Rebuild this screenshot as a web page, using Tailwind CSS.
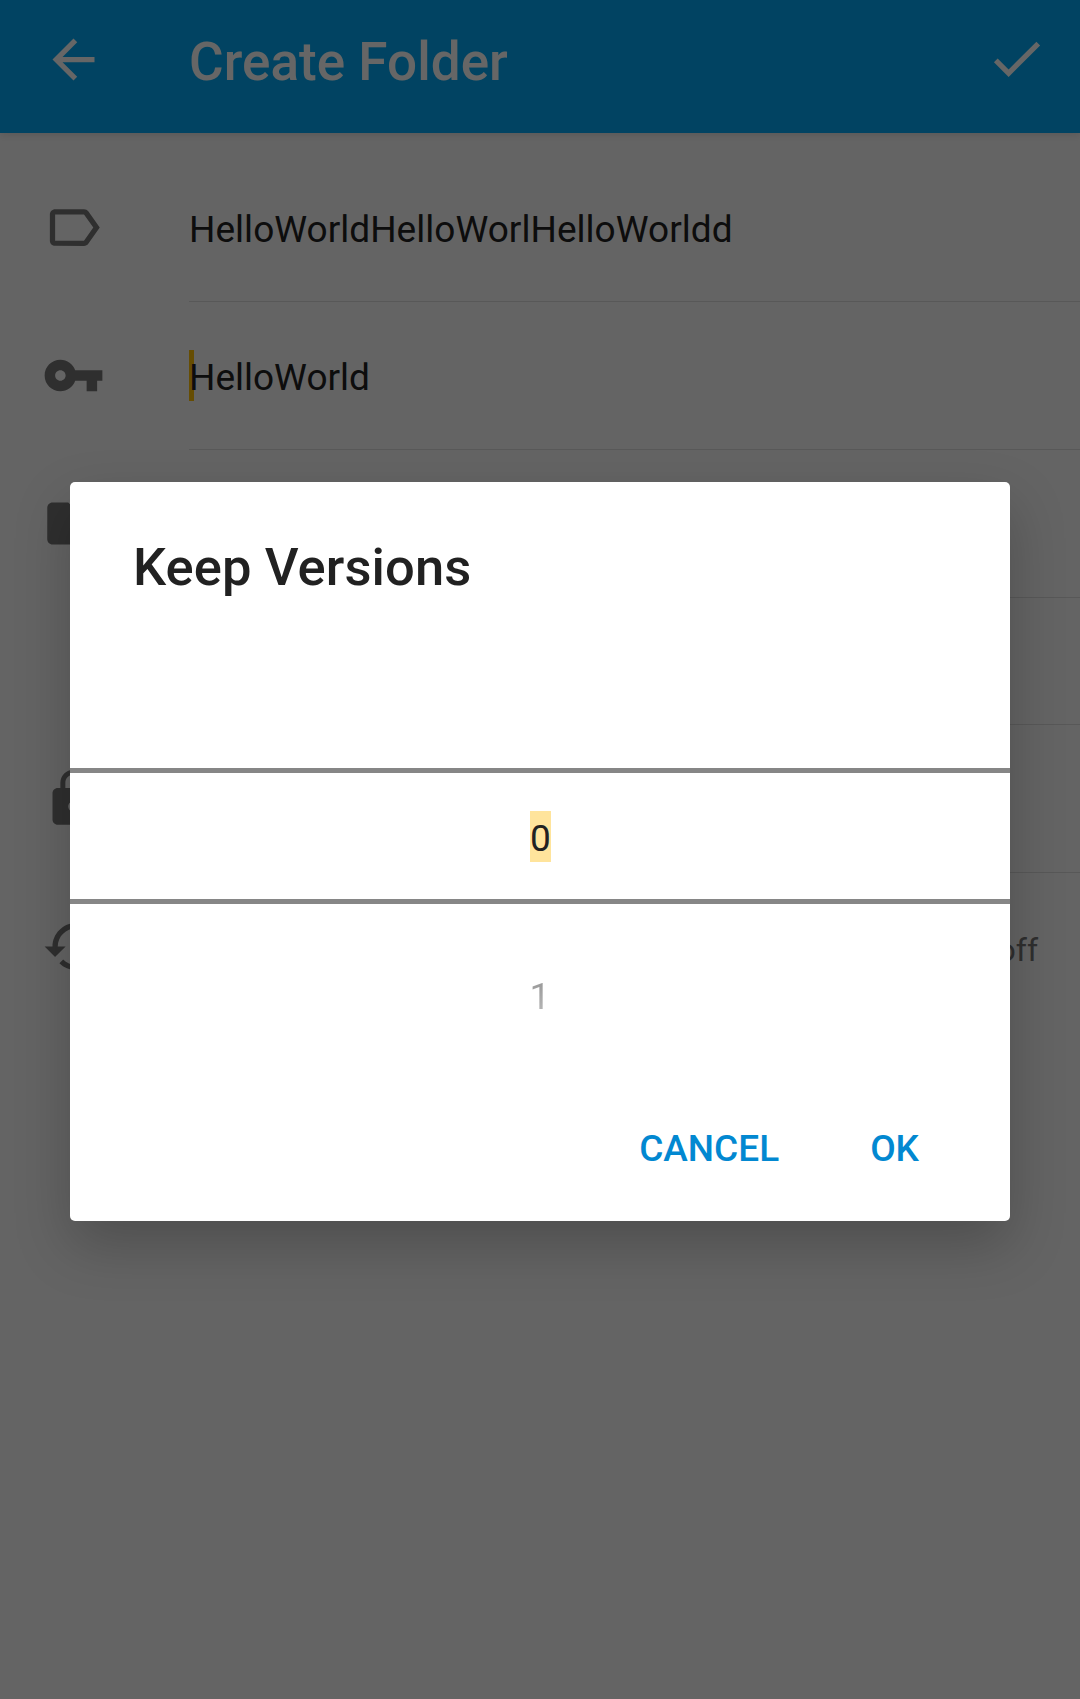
<!DOCTYPE html>
<html lang="en">
<head>
<meta charset="utf-8">
<title>Create Folder</title>
<script src="https://cdn.jsdelivr.net/npm/@tailwindcss/browser@4"></script>
</head>
<body class="relative h-[1699px] w-[1080px] overflow-hidden bg-[#fafafa] font-[Roboto,sans-serif] text-[37px] text-[#212121]">
  <header class="relative flex h-[133px] items-start bg-[#03a9f4] pt-7 pl-[42px] pr-[32px] text-white shadow-[0_2px_8px_rgba(0,0,0,0.12)]">
    <svg class="size-[63px] shrink-0" viewBox="0 0 24 24" fill="currentColor"><path d="M20 11H7.83l5.59-5.59L12 4l-8 8 8 8 1.41-1.41L7.83 13H20v-2z"/></svg>
    <h1 class="ml-[84px] grow text-[53px] leading-[69px] font-medium tracking-[0.05px]">Create Folder</h1>
    <svg class="-mt-px size-[63px] shrink-0" viewBox="0 0 24 24" fill="currentColor"><path d="M9 16.17L4.83 12l-1.42 1.41L9 19 21 7l-1.41-1.41z"/></svg>
  </header>

  <main class="pt-[21px]">
    <div class="flex h-[148px] pl-[42px]">
      <svg class="mt-[42px] size-[63px] shrink-0 text-[#757575]" viewBox="0 0 24 24" fill="currentColor"><path d="M17.63 5.84C17.27 5.33 16.67 5 16 5L5 5.01C3.9 5.01 3 5.9 3 7v10c0 1.1.9 1.99 2 1.99L16 19c.67 0 1.27-.33 1.63-.84L22 12l-4.37-6.16zM16 17H5V7h11l3.55 5L16 17z"/></svg>
      <div class="ml-[84px] grow border-b border-black/12 pt-[54px] leading-[43px] tracking-[0.03px]">HelloWorldHelloWorlHelloWorldd</div>
    </div>
    <div class="flex h-[148px] pl-[42px]">
      <svg class="mt-[42px] size-[63px] shrink-0 text-[#757575]" viewBox="0 0 24 24" fill="currentColor"><path d="M12.65 10C11.83 7.67 9.61 6 7 6c-3.31 0-6 2.69-6 6s2.69 6 6 6c2.61 0 4.83-1.67 5.65-4H17v4h4v-4h2v-4H12.65zM7 14c-1.1 0-2-.9-2-2s.9-2 2-2 2 .9 2 2-.9 2-2 2z"/></svg>
      <div class="relative ml-[84px] grow border-b border-black/12 pt-[54px] leading-[43px]"><span class="absolute top-[48px] left-0 h-[51px] w-[5px] bg-[#ffc107]"></span><span class="relative">HelloWorld</span></div>
    </div>
    <div class="flex h-[148px] pl-[42px]">
      <svg class="mt-[42px] size-[63px] shrink-0 text-[#757575]" viewBox="0 0 24 24" fill="currentColor"><path d="M10 4H4c-1.1 0-1.99.9-1.99 2L2 18c0 1.1.9 2 2 2h16c1.1 0 2-.9 2-2V8c0-1.1-.9-2-2-2h-8l-2-2z"/></svg>
      <div class="ml-[84px] grow border-b border-black/12"></div>
    </div>
    <div class="flex h-[127px] pl-[189px]"><div class="grow border-b border-black/12"></div></div>
    <div class="flex h-[148px] pl-[42px]">
      <svg class="mt-[42px] size-[63px] shrink-0 text-[#757575]" viewBox="0 0 24 24" fill="currentColor"><path d="M18 8h-1V6c0-2.76-2.24-5-5-5S7 3.24 7 6v2H6c-1.1 0-2 .9-2 2v10c0 1.1.9 2 2 2h12c1.1 0 2-.9 2-2V10c0-1.1-.9-2-2-2zm-6 9c-1.1 0-2-.9-2-2s.9-2 2-2 2 .9 2 2-.9 2-2 2zm3.1-9H8.900V6c0-1.710 1.390-3.100 3.100-3.100s3.100 1.390 3.100 3.100v2z"/></svg>
      <div class="ml-[84px] grow border-b border-black/12"></div>
    </div>
    <div class="flex h-[148px] pr-[42px] pl-[42px]">
      <svg class="mt-[42px] size-[63px] shrink-0 text-[#757575]" viewBox="0 0 24 24" fill="currentColor"><path d="M13 3c-4.970 0-9 4.030-9 9H1l3.890 3.890.070.140L9 12H6c0-3.870 3.130-7 7-7s7 3.130 7 7-3.130 7-7 7c-1.930 0-3.680-.790-4.940-2.060l-1.420 1.420C8.270 19.990 10.510 21 13 21c4.970 0 9-4.030 9-9s-4.030-9-9-9zm-1 5v5l4.280 2.540.720-1.210-3.500-2.080V8H12z"/></svg>
      <div class="grow pt-[59px] text-right text-[32px] leading-[37px] text-[#757575]">off</div>
    </div>
  </main>

  <div class="absolute inset-0 bg-black/60 px-[70px] pt-[482px]">
    <section class="flex h-[739px] flex-col rounded-[5px] bg-white shadow-[0_24px_56px_rgba(0,0,0,0.22)]">
      <h2 class="px-[63px] pt-[54px] text-[52.5px] leading-[62px] font-medium tracking-[0.09px]">Keep Versions</h2>
      <div class="mt-[170px] flex h-[136px] items-center justify-center border-y-[5px] border-[#868686] pl-px">
        <span class="h-[51px] w-[21px] bg-[#ffe49c] text-center leading-[55px]">0</span>
      </div>
      <div class="mt-[71px] bg-linear-to-b from-[#949494] to-[#bcbcbc] bg-clip-text text-center leading-[43px] text-transparent">1</div>
      <div class="mt-[109px] flex justify-end gap-[91px] pr-[91px] leading-[43px] font-medium text-[#0288d1]">
        <button>CANCEL</button>
        <button>OK</button>
      </div>
    </section>
  </div>
</body>
</html>
